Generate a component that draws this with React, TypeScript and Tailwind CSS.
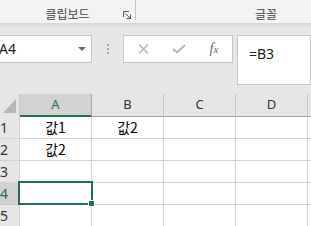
import React from 'react'

const font = { fontFamily: '"Noto Sans", "Noto Sans CJK KR", sans-serif' }

const columns = ['A', 'B', 'C', 'D']
const rows: Array<[string, string, string, string]> = [
  ['값1', '값2', '', ''],
  ['값2', '', '', ''],
  ['', '', '', ''],
  ['', '', '', ''],
  ['', '', '', ''],
]

function Launcher() {
  return (
    <svg width="9" height="8" viewBox="0 0 9 8" fill="none" stroke="#555" strokeWidth="1">
      <path d="M0.5 6V0.5H6" />
      <path d="M2.5 2.5L7.5 7.5" />
      <path d="M7.5 3.5V7.5H3.5" />
    </svg>
  )
}

export default function App() {
  return (
    <div className="relative flex h-[226px] w-[311px] flex-col overflow-hidden bg-[#e6e6e6] text-[#333]" style={font}>
      {/* ribbon */}
      <div className="flex h-[23px] shrink-0 bg-[#f3f3f3]">
        <div className="relative flex w-[135px] items-end justify-center pb-[2px]">
          <span className="text-[12px] leading-[14px] text-[#444]" style={{ fontFamily: '"Noto Sans CJK KR", sans-serif' }}>
            클립보드
          </span>
          <span className="absolute bottom-[4px] right-[3px]">
            <Launcher />
          </span>
        </div>
        <div className="h-[20px] w-px bg-[#c6c6c6]" />
        <div className="flex flex-1 items-end justify-center pb-[2px] pl-[85px]">
          <span className="text-[12px] leading-[14px] text-[#444]" style={{ fontFamily: '"Noto Sans CJK KR", sans-serif' }}>
            글꼴
          </span>
        </div>
      </div>

      {/* formula bar */}
      <div className="flex h-[71px] shrink-0 items-start bg-[linear-gradient(#d6d6d6,#e6e6e6_4px)] pt-[12px]">
        <div className="-ml-px flex h-[28px] w-[93px] items-center justify-between border border-[#c6c6c6] bg-white pr-[5px]">
          <span className="-ml-px text-[14px] leading-none text-[#222]">A4</span>
          <svg width="8" height="4" viewBox="0 0 8 4">
            <path d="M0 0H8L4 4Z" fill="#666" />
          </svg>
        </div>
        <div className="flex h-[28px] w-[31px] flex-col items-center justify-center gap-[2px]">
          <span className="h-[2px] w-[2px] bg-[#a6a6a6]" />
          <span className="h-[2px] w-[2px] bg-[#a6a6a6]" />
          <span className="h-[2px] w-[2px] bg-[#a6a6a6]" />
        </div>
        <div className="flex h-[28px] w-[110px] items-center border border-[#c6c6c6] bg-white">
          <div className="flex w-[38px] justify-center">
            <svg width="11" height="10" viewBox="0 0 11 10" stroke="#b4b4b4" strokeWidth="1.4">
              <path d="M1 0.5L10 9.5M10 0.5L1 9.5" />
            </svg>
          </div>
          <div className="flex w-[34px] justify-center">
            <svg width="14" height="10" viewBox="0 0 14 10" fill="none" stroke="#b4b4b4" strokeWidth="1.8">
              <path d="M1 5L5 8.5L13 1" />
            </svg>
          </div>
          <div className="flex w-[36px] justify-center">
            <span className="text-[14px] italic leading-none text-[#666]" style={{ fontFamily: '"Liberation Serif", serif' }}>
              f<span className="text-[11px]">x</span>
            </span>
          </div>
        </div>
        <div className="ml-[4px] h-[50px] flex-1 border border-[#c6c6c6] bg-white pl-[11px] pt-[5px]">
          <span className="text-[14px] leading-[16px] text-[#222]">=B3</span>
        </div>
      </div>

      {/* column headers */}
      <div className="flex h-[23px] shrink-0">
        <div className="relative w-[20px] border-r border-[#c6c6c6]">
          <svg className="absolute left-[3px] top-[5px]" width="13" height="14" viewBox="0 0 13 14">
            <path d="M13 0V14H0Z" fill="#b7b7b7" />
          </svg>
        </div>
        {columns.map((c, i) => (
          <div
            key={c}
            className={
              i === 0
                ? 'flex w-[72px] items-center justify-center border-r border-b-2 border-r-[#a8a8a8] border-b-[#217346] bg-[#d2d2d2] text-[13px] text-[#217346]'
                : 'flex w-[72px] items-center justify-center border-r border-b border-r-[#c6c6c6] border-b-[#a0a0a0] text-[13px] text-[#333]'
            }
          >
            {c}
          </div>
        ))}
        <div className="flex-1 border-b border-[#a0a0a0]" />
      </div>

      {/* rows */}
      {rows.map((cells, r) => (
        <div key={r} className="flex h-[22px] shrink-0">
          <div
            className={
              r === 3
                ? 'flex w-[20px] items-center border-r border-b border-[#c6c6c6] bg-[#d2d2d2] text-[14px] text-[#217346]'
                : 'flex w-[20px] items-center border-r border-b border-[#d4d4d4] text-[14px] text-[#333]'
            }
          >
            <span className="leading-none">{r + 1}</span>
          </div>
          {cells.map((v, i) => (
            <div
              key={i}
              className="flex w-[72px] items-center justify-center border-r border-b border-[#d4d4d4] bg-white text-[14px] text-black"
              style={{ fontFamily: '"Noto Sans CJK KR", sans-serif' }}
            >
              {v}
            </div>
          ))}
          <div className="flex-1 border-b border-[#d4d4d4] bg-white" />
        </div>
      ))}

      {/* active cell A4 */}
      <div className="absolute left-[18px] top-[181px] h-[24px] w-[75px] border-2 border-[#217346]" />
      <div className="absolute left-[88px] top-[200px] h-[7px] w-[7px] border border-white bg-[#217346]" />
    </div>
  )
}
